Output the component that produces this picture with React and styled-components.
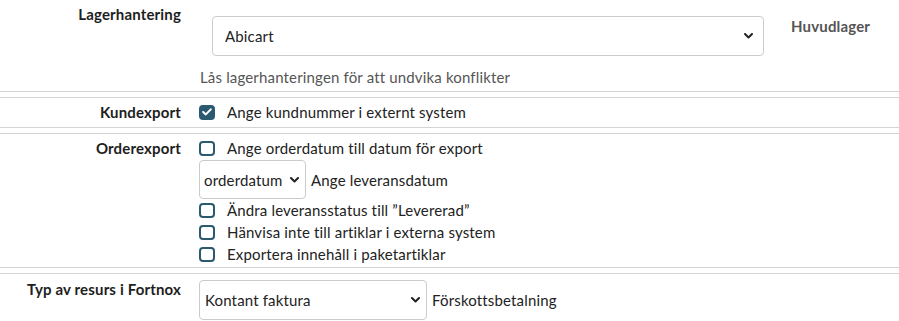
import React from 'react';
import styled, { createGlobalStyle } from 'styled-components';

const Global = createGlobalStyle`
  html, body { margin: 0; padding: 0; background: #fff; }
  body {
    font-family: Lato, "Noto Sans", sans-serif;
    font-size: 15px;
    letter-spacing: 0.16px;
    color: #222;
  }
`;

const Form = styled.div`
  display: flex;
  flex-direction: column;
  gap: 5px;
  width: 899px;
`;

const Row = styled.div`
  display: grid;
  grid-template-columns: 181px 1fr;
  column-gap: 18px;
  align-items: start;
  border-top: 1px solid #d4d4d4;
  border-bottom: 1px solid #d4d4d4;
  padding: ${(p) => p.$pad || '3px 0 3px 0'};
  &:first-child { border-top: none; }
  &:last-child { border-bottom: none; }
`;

const Label = styled.div`
  font-weight: 700;
  text-align: right;
  line-height: 22px;
  color: #1e1e1e;
`;

const Content = styled.div`
  display: flex;
  flex-direction: column;
  align-items: flex-start;
`;

const Inline = styled.div`
  display: flex;
  align-items: ${(p) => p.$align || 'center'};
  gap: ${(p) => p.$gap || '5px'};
  margin-top: ${(p) => p.$mt || '0'};
  margin-left: ${(p) => p.$ml || '0'};
  line-height: 22px;
`;

const SelectWrap = styled.div`
  position: relative;
  display: inline-flex;
  margin-left: ${(p) => p.$ml || '0'};
  margin-top: ${(p) => p.$mt || '0'};
`;

const Select = styled.select`
  appearance: none;
  -webkit-appearance: none;
  box-sizing: border-box;
  width: ${(p) => p.$w}px;
  height: ${(p) => p.$h || 40}px;
  padding: 0 20px 0 ${(p) => p.$pl}px;
  border: 1px solid #cbcbcb;
  border-radius: 4px;
  background: #fff;
  font-family: Lato, "Noto Sans", sans-serif;
  font-size: 15px;
  letter-spacing: 0.16px;
  color: #222;
  outline: none;
`;

const Chevron = styled.svg`
  position: absolute;
  right: ${(p) => p.$r}px;
  top: 50%;
  transform: translateY(-50%);
  pointer-events: none;
`;

const Side = styled.span`
  font-weight: 700;
  color: #555;
  line-height: 22px;
  margin-left: 27px;
  margin-top: 12px;
`;

const Help = styled.div`
  color: #555;
  line-height: 22px;
  margin-top: 10px;
  margin-left: 1px;
`;

const Check = styled.label`
  display: flex;
  align-items: center;
  gap: 12px;
  line-height: 22px;
  color: #222;
`;

const Box = styled.span`
  box-sizing: border-box;
  width: 16px;
  height: 15px;
  border: 2px solid #2b5a70;
  border-radius: 4px;
  background: ${(p) => (p.$on ? '#2b5a70' : '#fff')};
  display: inline-flex;
  align-items: center;
  justify-content: center;
  flex: none;
`;

const Text = styled.span`
  line-height: 22px;
  color: #222;
`;

function Dropdown({ w, pl, r, h, ml, mt, value }) {
  return (
    <SelectWrap $ml={ml} $mt={mt}>
      <Select $w={w} $pl={pl} $h={h} defaultValue={value}>
        <option value={value}>{value}</option>
      </Select>
      <Chevron $r={r} width="9" height="6" viewBox="0 0 9 6">
        <path d="M1 1 L4.5 4.5 L8 1" fill="none" stroke="#222" strokeWidth="2" strokeLinecap="round" strokeLinejoin="round" />
      </Chevron>
    </SelectWrap>
  );
}

function CheckItem({ on, children }) {
  return (
    <Check>
      <Box $on={on}>
        {on && (
          <svg width="10" height="8" viewBox="0 0 10 8">
            <path d="M1.2 4 L3.8 6.4 L8.8 1.4" fill="none" stroke="#fff" strokeWidth="2" strokeLinecap="round" strokeLinejoin="round" />
          </svg>
        )}
      </Box>
      {children}
    </Check>
  );
}

export default function App() {
  return (
    <>
      <Global />
      <Form>
        <Row $pad="3px 0 3px 0">
          <Label>Lagerhantering</Label>
          <Content>
            <Inline $align="flex-start" $gap="0">
              <Dropdown w={552} pl={12} r={11} h={40} ml="13px" mt="13px" value="Abicart" />
              <Side>Huvudlager</Side>
            </Inline>
            <Help>Lås lagerhanteringen för att undvika konflikter</Help>
          </Content>
        </Row>
        <Row $pad="3px 0 4px 0">
          <Label>Kundexport</Label>
          <Content>
            <CheckItem on>Ange kundnummer i externt system</CheckItem>
          </Content>
        </Row>
        <Row $pad="3px 0 2px 0">
          <Label>Orderexport</Label>
          <Content>
            <CheckItem>Ange orderdatum till datum för export</CheckItem>
            <Inline $mt="1px">
              <Dropdown w={107} pl={4} r={7} h={39} value="orderdatum" />
              <Text>Ange leveransdatum</Text>
            </Inline>
            <CheckItem>Ändra leveransstatus till ”Levererad”</CheckItem>
            <CheckItem>Hänvisa inte till artiklar i externa system</CheckItem>
            <CheckItem>Exportera innehåll i paketartiklar</CheckItem>
          </Content>
        </Row>
        <Row $pad="4px 0 0 0">
          <Label>Typ av resurs i Fortnox</Label>
          <Content>
            <Inline $mt="2px">
              <Dropdown w={228} pl={5} r={7} h={40} value="Kontant faktura" />
              <Text>Förskottsbetalning</Text>
            </Inline>
          </Content>
        </Row>
      </Form>
    </>
  );
}
